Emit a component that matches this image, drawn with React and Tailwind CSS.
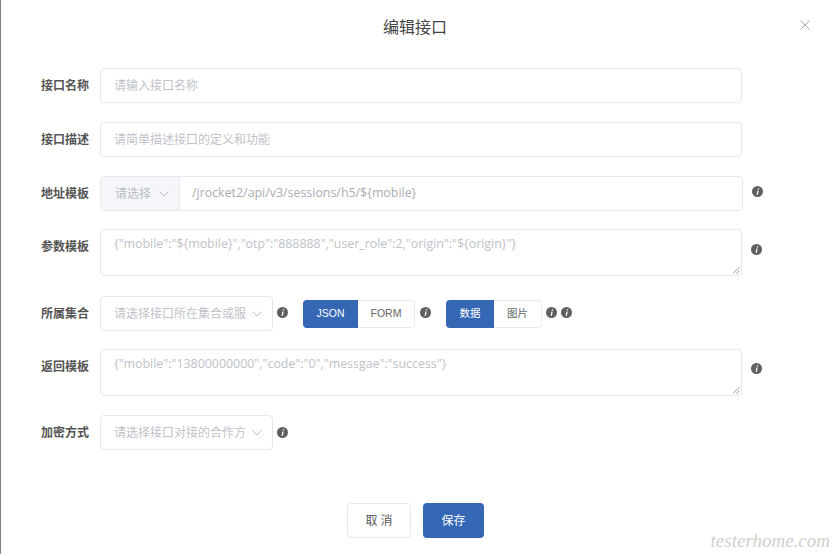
import React from 'react';

const cjk = 'font-["Open_Sans","Noto_Sans_CJK_SC",sans-serif]';

const InfoIcon = ({ className = '' }) => (
  <svg width="11" height="11" viewBox="0 0 11 11" className={`shrink-0 ${className}`}>
    <circle cx="5.5" cy="5.5" r="5.5" fill="#5f5f5f" />
    <path d="M6 2.2h1.3l-.3 1.2H5.7zM5.4 4.4h1.3L5.9 8.8H4.6z" fill="#fff" />
  </svg>
);

const Chevron = () => (
  <svg width="10" height="6" viewBox="0 0 10 6" fill="none" stroke="#b9bcc4" strokeWidth="1" className="shrink-0">
    <path d="M.5.5 5 5 9.5.5" />
  </svg>
);

const Label = ({ children, className = '' }) => (
  <div className={`w-[49px] shrink-0 mr-[10px] text-xs font-bold text-[#555] ${className}`}>{children}</div>
);

const Row = ({ label, className = '', children }) => (
  <div className={`flex items-center ${className}`}>
    <Label>{label}</Label>
    {children}
  </div>
);

const TextareaRow = ({ label, text, className = '', iconClass = '' }) => (
  <div className={`flex items-start ${className}`}>
    <Label className="mt-[10px]">{label}</Label>
    <div className="relative w-[642px] h-[47px] border border-[#e6e8ef] rounded px-[13px] pt-[4px] text-[12.4px] leading-[20px] text-[#bfc2c9]">
      {text}
      <svg width="8" height="8" viewBox="0 0 8 8" stroke="#999" className="absolute right-[1px] bottom-[1px]">
        <path d="M1 7.5 7.5 1M4.5 7.5 7.5 4.5" />
      </svg>
    </div>
    <InfoIcon className={`ml-[9px] ${iconClass}`} />
  </div>
);

const SelectBox = ({ text }) => (
  <div className="flex items-center justify-between w-[173px] h-[35px] border border-[#e6e8ef] rounded pl-[13px] pr-[10px] text-xs text-[#bfc2c9] whitespace-nowrap">
    <span>{text}</span>
    <Chevron />
  </div>
);

const Toggle = ({ left, right, leftWidth, rightWidth }) => (
  <div className='flex h-[28px] text-[10.5px] font-["Liberation_Sans","Noto_Sans_CJK_SC",sans-serif]'>
    <div className={`flex items-center justify-center rounded-l bg-[#3667b5] text-white ${leftWidth}`}>{left}</div>
    <div className={`flex items-center justify-center rounded-r border border-l-0 border-[#e9ebf1] bg-white text-[#666] ${rightWidth}`}>{right}</div>
  </div>
);

export default function App() {
  return (
    <div className={`relative w-[832px] h-[556px] bg-white overflow-hidden ${cjk}`}>
      <div className="h-[554px] border-l border-[#808080] pl-[40px] pt-[17px]">
        <div className="relative w-[790px] h-[20px]">
          <div className="text-center text-base leading-[20px] text-[#444] pr-[42px]">编辑接口</div>
          <svg width="10" height="10" viewBox="0 0 10 10" stroke="#aaa" className="absolute right-[21px] top-[3px]">
            <path d="M.5.5l9 9M9.5.5l-9 9" />
          </svg>
        </div>

        <Row label="接口名称" className="mt-[31px]">
          <div className="flex items-center w-[642px] h-[35px] border border-[#e6e8ef] rounded px-[13px] text-xs text-[#bfc2c9]">请输入接口名称</div>
        </Row>
        <Row label="接口描述" className="mt-[19px]">
          <div className="flex items-center w-[642px] h-[35px] border border-[#e6e8ef] rounded px-[13px] text-xs text-[#bfc2c9]">请简单描述接口的定义和功能</div>
        </Row>
        <Row label="地址模板" className="mt-[19px]">
          <div className="flex w-[643px] h-[35px] border border-[#e6e8ef] rounded overflow-hidden text-xs">
            <div className="flex items-center gap-[8px] w-[79px] pl-[14px] bg-[#f5f6fa] border-r border-[#e6e8ef] text-[#b9bcc4]">
              请选择
              <Chevron />
            </div>
            <div className="flex items-center pl-[12px] text-[12.4px] text-[#a9acb3]">/jrocket2/api/v3/sessions/h5/${'{'}mobile{'}'}</div>
          </div>
          <InfoIcon className="ml-[9px] -mt-[5px]" />
        </Row>
        <TextareaRow
          label="参数模板"
          className="mt-[18px]"
          iconClass="mt-[15px]"
          text={'{"mobile":"${mobile}","otp":"888888","user_role":2,"origin":"${origin}"}'}
        />
        <Row label="所属集合" className="mt-[20px]">
          <SelectBox text="请选择接口所在集合或服" />
          <InfoIcon className="ml-[4px] -mt-[3px]" />
          <div className="ml-[15px]">
            <Toggle left="JSON" right="FORM" leftWidth="w-[55px]" rightWidth="w-[57px]" />
          </div>
          <InfoIcon className="ml-[5px] -mt-[3px]" />
          <div className="ml-[15px]">
            <Toggle left="数据" right="图片" leftWidth="w-[48px]" rightWidth="w-[48px]" />
          </div>
          <InfoIcon className="ml-[4px] -mt-[3px]" />
          <InfoIcon className="ml-[4px] -mt-[3px]" />
        </Row>
        <TextareaRow
          label="返回模板"
          className="mt-[18px]"
          iconClass="mt-[14px]"
          text={'{"mobile":"13800000000","code":"0","messgae":"success"}'}
        />
        <Row label="加密方式" className="mt-[19px]">
          <SelectBox text="请选择接口对接的合作方" />
          <InfoIcon className="ml-[4px]" />
        </Row>

        <div className="flex justify-center gap-[12px] mt-[53px] pr-[42px]">
          <div className="flex items-center justify-center w-[64px] h-[35px] border border-[#e6e8ef] rounded text-xs text-[#555]">取 消</div>
          <div className="flex items-center justify-center w-[61px] h-[35px] rounded bg-[#3667b5] text-xs text-white">保存</div>
        </div>
      </div>

      <div className="absolute right-[2px] top-[527px] font-['Liberation_Serif',serif] italic text-[19px] text-[#cfcfcf]">testerhome.com</div>
    </div>
  );
}
